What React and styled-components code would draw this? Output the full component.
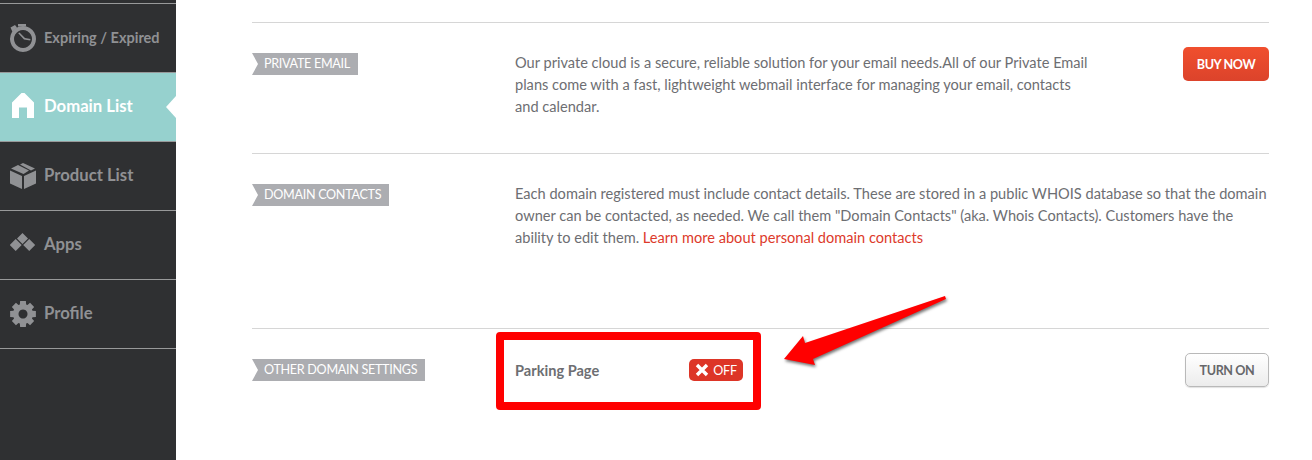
import styled, { createGlobalStyle } from "styled-components";

const GlobalStyle = createGlobalStyle`
  html, body {
    margin: 0;
    padding: 0;
    background: #fff;
  }
  body {
    font-family: Lato, "Open Sans", sans-serif;
    overflow: hidden;
  }
`;

const Page = styled.div`
  position: relative;
  display: flex;
  width: 1312px;
  height: 460px;
  overflow: hidden;
`;

const Sidebar = styled.nav`
  flex: 0 0 176px;
  padding-top: 3px;
  background: #2f3032;
  box-sizing: border-box;
`;

const SideList = styled.div`
  border-top: 1px solid #98999a;
`;

const SideItem = styled.a`
  position: relative;
  display: flex;
  align-items: center;
  gap: 8px;
  height: 68px;
  padding-left: 10px;
  border-bottom: 1px solid #98999a;
  background: ${(p) => (p.$active ? "#96d1ce" : "transparent")};
  color: ${(p) => (p.$active ? "#fff" : "#909194")};
  font-size: ${(p) => (p.$small ? 14.5 : 16.7)}px;
  font-weight: 700;

  ${(p) =>
    p.$active &&
    `
    &::after {
      content: "";
      position: absolute;
      right: 0;
      top: 23px;
      border-style: solid;
      border-width: 11px 10px 11px 0;
      border-color: transparent #fff transparent transparent;
    }
  `}
`;

const SideLabel = styled.span`
  margin-bottom: ${(p) => (p.$small ? 1 : 3)}px;
`;

const SideIcon = styled.svg`
  flex: 0 0 26px;
  width: 26px;
  height: 28px;
  fill: currentColor;
`;

const Main = styled.main`
  flex: 1;
  padding: 22px 43px 0 76px;
  color: #6d6e72;
`;

const Row = styled.section`
  display: grid;
  grid-template-columns: 263px 1fr auto;
  align-items: start;
  padding: 24px 0 ${(p) => p.$bottom}px;
  border-top: 1px solid #d6d6d6;
`;

const Tag = styled.div`
  justify-self: start;
  margin-top: 6px;
  height: 22px;
  padding: 0 8px 0 12px;
  background: #acadb1;
  color: #fff;
  font-size: 12.6px;
  letter-spacing: -0.3px;
  line-height: 22px;
  white-space: nowrap;
  clip-path: polygon(0 0, 100% 0, 100% 100%, 0 100%, 6px 50%);
`;

const Description = styled.p`
  margin: 5px 0 0;
  max-width: ${(p) => p.$max || 760}px;
  font-size: 14.6px;
  line-height: 22px;
`;

const LearnLink = styled.a`
  color: #dd3a2b;
`;

const Button = styled.button`
  box-sizing: border-box;
  height: 34px;
  padding: 0;
  font-family: inherit;
  font-size: 12.6px;
  letter-spacing: -0.4px;
  font-weight: 700;
  border-radius: 5px;
`;

const BuyButton = styled(Button)`
  width: 86px;
  border: 0;
  color: #fff;
  background: linear-gradient(#f04f2e, #dc432b);
`;

const TurnOnButton = styled(Button)`
  width: 84px;
  border: 1px solid #b9b9b9;
  color: #66676a;
  background: linear-gradient(#fff, #ececec);
  box-shadow: 0 1px 1px rgba(0, 0, 0, 0.12);
`;

const Setting = styled.div`
  display: flex;
  align-items: center;
  height: 22px;
  margin-top: 6px;
`;

const SettingLabel = styled.span`
  width: 174px;
  font-size: 14.6px;
  font-weight: 700;
`;

const StatusPill = styled.span`
  display: flex;
  align-items: center;
  justify-content: center;
  gap: 4px;
  width: 54px;
  height: 22px;
  border-radius: 5px;
  background: #dd3527;
  color: #fff;
  font-size: 12.6px;
  letter-spacing: -0.3px;
`;

const Highlight = styled.div`
  position: absolute;
  left: 496px;
  top: 332px;
  width: 265px;
  height: 78px;
  box-sizing: border-box;
  border: 8px solid #ff0000;
  border-radius: 4px;
`;

const Arrow = styled.svg`
  position: absolute;
  left: 770px;
  top: 280px;
  width: 200px;
  height: 100px;
  filter: drop-shadow(1px 2px 1.5px rgba(0, 0, 0, 0.55));
`;

// eight toothed cog, built once from the tooth angles
const gearPath = () => {
  const teeth = 8;
  const point = (r, a) =>
    `${(13 + r * Math.cos(a)).toFixed(2)} ${(14 + r * Math.sin(a)).toFixed(2)}`;
  const parts = [];
  for (let i = 0; i < teeth; i++) {
    const a = (i / teeth) * Math.PI * 2 - Math.PI / 2;
    parts.push(point(10, a - 0.32), point(13.2, a - 0.22), point(13.2, a + 0.22), point(10, a + 0.32));
  }
  return `M${parts.join("L")}ZM13 9.5a4.5 4.5 0 1 0 .01 0Z`;
};

const nav = [
  {
    label: "Expiring / Expired",
    small: true,
    icon: (
      <>
        <path
          fillRule="evenodd"
          d="M13 2a13 13 0 1 1-.01 0ZM13 6a9 9 0 1 0 .01 0Z"
        />
        <path d="M0.5 3.5 5 1 7 3.5 2.5 8ZM8 0h8v2.5H8Z" />
        <path d="M9.5 8.5 15 14l5.5 1-.3 1.6-6.2-1-5.8-6.4Z" />
      </>
    ),
  },
  {
    label: "Domain List",
    active: true,
    icon: <path d="M11.5 0h3l9.5 9.5V25h-7V14.5H9V25H2V9.5Z" />,
  },
  {
    label: "Product List",
    icon: (
      <>
        <path d="M1 6.5 8 3l11 5.5-5.5 3.5ZM10 2.5 13 1l12 5.5-4 2Z" />
        <path d="M0 8.5 12 14v13L0 21.5ZM14 14 26 8.5v13L14 27Z" />
      </>
    ),
  },
  {
    label: "Apps",
    icon: (
      <path d="M12.5 2 18 7.5 12.5 13 7 7.5ZM5.7 8 11.7 14 5.7 20-.3 14ZM19.2 8 25.2 14 19.2 20 13.2 14Z" />
    ),
  },
  {
    label: "Profile",
    icon: <path fillRule="evenodd" d={gearPath()} />,
  },
];

const App = () => (
  <Page>
    <GlobalStyle />
    <Sidebar>
      <SideList>
        {nav.map((item) => (
          <SideItem key={item.label} $active={item.active} $small={item.small}>
            <SideIcon viewBox="0 0 26 28">{item.icon}</SideIcon>
            <SideLabel $small={item.small}>{item.label}</SideLabel>
          </SideItem>
        ))}
      </SideList>
    </Sidebar>
    <Main>
      <Row $bottom={35}>
        <Tag>PRIVATE EMAIL</Tag>
        <Description $max={580}>
          Our private cloud is a secure, reliable solution for your email
          needs.All of our Private Email plans come with a fast, lightweight
          webmail interface for managing your email, contacts and calendar.
        </Description>
        <BuyButton>BUY NOW</BuyButton>
      </Row>
      <Row $bottom={79}>
        <Tag>DOMAIN CONTACTS</Tag>
        <Description>
          Each domain registered must include contact details. These are stored
          in a public WHOIS database so that the domain owner can be contacted,
          as needed. We call them "Domain Contacts" (aka. Whois Contacts).
          Customers have the ability to edit them.{" "}
          <LearnLink>Learn more about personal domain contacts</LearnLink>
        </Description>
      </Row>
      <Row $bottom={24}>
        <Tag>OTHER DOMAIN SETTINGS</Tag>
        <Setting>
          <SettingLabel>Parking Page</SettingLabel>
          <StatusPill>
            <svg width="14" height="14" viewBox="0 0 14 14">
              <path
                d="M2 2 12 12M12 2 2 12"
                stroke="#fff"
                strokeWidth="3.4"
                fill="none"
              />
            </svg>
            OFF
          </StatusPill>
        </Setting>
        <TurnOnButton>TURN ON</TurnOnButton>
      </Row>
    </Main>
    <Highlight />
    <Arrow viewBox="0 0 200 100">
      <path
        d="M175 16 176 19 43 79 45 85 14 79 33 56 35 63Z"
        fill="#ff0000"
      />
    </Arrow>
  </Page>
);

export default App;
